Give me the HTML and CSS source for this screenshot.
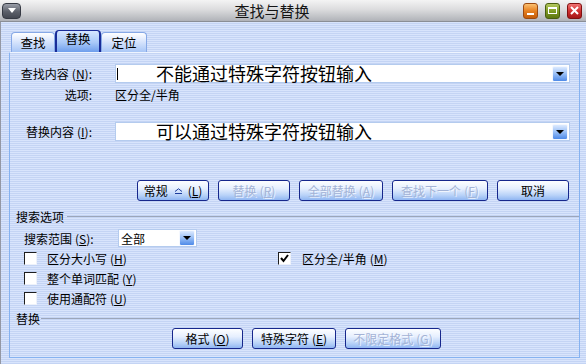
FILE: index.html
```html
<!DOCTYPE html>
<html>
<head>
<meta charset="utf-8">
<link rel="stylesheet" href="styles.css">
</head>
<body>
<div class="window">
  <div class="titlebar">
    <div class="menu-btn"><span class="tri"></span></div>
    <div class="title">查找与替换</div>
    <div class="wbtns">
      <div class="wbtn min"><span></span></div>
      <div class="wbtn max"><span></span></div>
      <div class="wbtn close"><svg width="9" height="9" viewBox="0 0 9 9"><path d="M1 1 L8 8 M8 1 L1 8" stroke="#fff" stroke-width="2" fill="none"/></svg></div>
    </div>
  </div>
  <div class="client">
    <div class="tabs">
      <div class="tab t1">查找</div>
      <div class="tab t2 active">替换</div>
      <div class="tab t3">定位</div>
    </div>
    <div class="panel">
      <div class="row r-find">
        <span class="lbl">查找内容<span class="k">(<u>N</u>)</span>:</span>
        <div class="combo"><span class="caret"></span><span class="ctext">不能通过特殊字符按钮输入</span><span class="drop"></span></div>
      </div>
      <div class="row r-opt">
        <span class="lbl">选项:</span>
        <span>区分全/半角</span>
      </div>
      <div class="row r-rep">
        <span class="lbl">替换内容<span class="k">(<u>I</u>)</span>:</span>
        <div class="combo"><span class="ctext nocaret">可以通过特殊字符按钮输入</span><span class="drop"></span></div>
      </div>
      <div class="btnrow r-btns">
        <div class="btn w72">常规<svg class="chev" width="9" height="6" viewBox="0 0 9 6"><path d="M1 3.5 L4.5 0.8 L8 3.5" stroke="#1c3c9c" fill="none"/><path d="M1 5.5 H8" stroke="#1c3c9c"/></svg>(<u>L</u>)</div>
        <div class="btn w72 dis">替换<span class="k">(<u>R</u>)</span></div>
        <div class="btn w84 dis">全部替换<span class="k">(<u>A</u>)</span></div>
        <div class="btn w96 dis">查找下一个<span class="k">(<u>F</u>)</span></div>
        <div class="btn w72">取消</div>
      </div>
      <div class="sec s1"><span>搜索选项</span><span class="line"></span></div>
      <div class="r-range">
        <span class="lbl2">搜索范围<span class="k">(<u>S</u>)</span>:</span>
        <div class="select"><span class="stext">全部</span><span class="drop"></span></div>
      </div>
      <div class="chk-row first">
        <div class="left-group"><span class="cb"></span><span>区分大小写<span class="k">(<u>H</u>)</span></span></div>
        <span class="cb checked"><svg width="11" height="11" viewBox="0 0 11 11"><path d="M2 5 L4.5 8 L9 2" stroke="#000" stroke-width="2" fill="none"/></svg></span><span>区分全/半角<span class="k">(<u>M</u>)</span></span>
      </div>
      <div class="chk-row">
        <span class="cb"></span><span>整个单词匹配<span class="k">(<u>Y</u>)</span></span>
      </div>
      <div class="chk-row">
        <span class="cb"></span><span>使用通配符<span class="k">(<u>U</u>)</span></span>
      </div>
      <div class="sec s2"><span>替换</span><span class="line"></span></div>
      <div class="btnrow r-btns2">
        <div class="btn w71">格式<span class="k">(<u>O</u>)</span></div>
        <div class="btn w84">特殊字符<span class="k">(<u>E</u>)</span></div>
        <div class="btn w96 dis">不限定格式<span class="k">(<u>G</u>)</span></div>
      </div>
    </div>
  </div>
</div>
</body>
</html>
```
FILE: styles.css
```css
* { box-sizing: border-box; }
body {
  margin: 0;
  width: 586px;
  height: 364px;
  overflow: hidden;
  font-family: "Noto Sans CJK SC", "Noto Sans", sans-serif;
  font-size: 12px;
  color: #000;
}
.window {
  width: 586px;
  height: 364px;
  display: flex;
  flex-direction: column;
  background: repeating-linear-gradient(to bottom, #d8e4fc 0px, #d8e4fc 1px, #c4d4f4 1px, #c4d4f4 2px);
}
.titlebar {
  height: 22px;
  flex: none;
  display: flex;
  align-items: center;
  padding: 0 4px 0 2px;
  background: linear-gradient(#f4f4f4, #dcdcde 45%, #c0c2c6 80%, #b0b2b8);
  border-bottom: 1px solid #8a8e96;
}
.menu-btn {
  width: 19px;
  height: 16px;
  border-radius: 4px;
  background: linear-gradient(#9a9ea8, #5c606a 55%, #444852);
  border: 1px solid #363a44;
  display: flex;
  align-items: center;
  justify-content: center;
}
.menu-btn .tri {
  width: 0;
  height: 0;
  border-left: 4px solid transparent;
  border-right: 4px solid transparent;
  border-top: 5px solid #fff;
}
.title {
  flex: 1;
  text-align: center;
  font-size: 15px;
  line-height: 21px;
  color: #141414;
}
.wbtns { display: flex; gap: 7px; }
.wbtn {
  width: 15px;
  height: 16px;
  border-radius: 3px;
  display: flex;
  align-items: center;
  justify-content: center;
}
.min { background: linear-gradient(#fbc070, #e68020 50%, #c45c08); border: 1px solid #9c4a10; }
.min span { width: 7px; height: 2px; background: #fff; margin-top: 7px; }
.max { background: linear-gradient(#b4c860, #809c24 50%, #5e7612); border: 1px solid #4a5e10; }
.max span { width: 9px; height: 7px; border: 1px solid #fff; border-top-width: 2px; }
.close { background: linear-gradient(#f07474, #d03030 50%, #a41616); border: 1px solid #801010; }

.client {
  flex: 1;
  border-left: 1px solid #9498a4;
  display: flex;
  flex-direction: column;
}
.tabs {
  height: 30px;
  flex: none;
  display: flex;
  align-items: flex-end;
  padding: 8px 0 0 10px;
}
.tab {
  height: 20px;
  border: 1px solid #86a8e6;
  border-bottom: none;
  border-radius: 4px 4px 0 0;
  background: linear-gradient(#ffffff, #dde8fd 40%, #a8c6f6);
  text-align: center;
  line-height: 19px;
  font-size: 12.5px;
}
.t1 { width: 44px; }
.t2 { width: 46px; }
.t3 { width: 46px; }
.tab.active {
  height: 22px;
  border: 1px solid #1a2c98;
  border-width: 1px 2px 0 2px;
  background: linear-gradient(#d6e6ff, #a8c8f8 55%, #6e9eec);
  line-height: 15px;
}
.panel {
  margin-left: 8px;
  width: 571px;
  height: 306px;
  border: 1px solid #86b2f0;
  border-top-color: #eef4ff;
  display: flex;
  flex-direction: column;
}
.k { margin-left: 3px; }
.row { display: flex; align-items: center; flex: none; }
.lbl {
  width: 82px;
  margin-right: 23px;
  text-align: right;
  flex: none;
  white-space: nowrap;
}
.r-find { margin-top: 11px; height: 19px; }
.r-opt { margin-top: 4px; height: 15px; }
.r-rep { margin-top: 20px; height: 19px; }
.combo {
  width: 455px;
  height: 19px;
  background: #fff;
  border: 1px solid #b4cbee;
  display: flex;
  align-items: center;
}
.caret { width: 1px; height: 12px; background: #000; margin-left: 1px; flex: none; }
.ctext {
  flex: 1;
  font-size: 18px;
  line-height: 19px;
  margin-left: 38px;
  white-space: nowrap;
}
.ctext.nocaret { margin-left: 40px; }
.drop {
  width: 16px;
  height: 16px;
  flex: none;
  margin-right: 1px;
  border: 1px solid #f4f8ff;
  border-radius: 2px;
  background: linear-gradient(#dceaff, #98bef6 50%, #4e8ae8);
  display: flex;
  align-items: center;
  justify-content: center;
}
.drop::after {
  content: "";
  width: 0;
  height: 0;
  border-left: 4px solid transparent;
  border-right: 4px solid transparent;
  border-top: 4px solid #000;
}
.btnrow { display: flex; gap: 9px; flex: none; }
.r-btns { margin-top: 39px; padding-left: 127px; }
.r-btns2 { margin-top: 2px; padding-left: 162px; }
.btn {
  height: 21px;
  border: 1px solid #17278c;
  border-radius: 3px;
  background: linear-gradient(#fdfeff 0%, #e6effe 40%, #b8d2f8 75%, #90b6f2 100%);
  display: flex;
  align-items: center;
  justify-content: center;
  white-space: nowrap;
  font-size: 12px;
}
.btn.dis { color: #a4b3d6; text-shadow: 1px 1px 0 rgba(255,255,255,0.7); }
.w71 { width: 71px; }
.w72 { width: 72px; }
.w84 { width: 84px; }
.w96 { width: 96px; }
.chev { margin: 0 5px 0 6px; }
.sec {
  display: flex;
  align-items: center;
  height: 15px;
  padding-left: 6px;
  flex: none;
}
.sec .line { flex: 1; height: 1px; background: #9ca6ba; margin-left: 3px; }
.s1 { margin-top: 8px; }
.s2 { margin-top: 3px; }
.s2 .line { margin-left: 1px; }
.r-range {
  margin-top: 5px;
  height: 18px;
  display: flex;
  align-items: center;
  padding-left: 14px;
  flex: none;
}
.lbl2 { width: 94px; white-space: nowrap; }
.select {
  width: 79px;
  height: 18px;
  background: #fff;
  border: 1px solid #b4cbee;
  display: flex;
  align-items: center;
}
.stext { flex: 1; padding-left: 2px; }
.chk-row {
  height: 20px;
  display: flex;
  align-items: center;
  padding-left: 14px;
  flex: none;
}
.chk-row.first { margin-top: 1px; }
.left-group { width: 254px; display: flex; align-items: center; }
.cb {
  width: 13px;
  height: 13px;
  flex: none;
  background: #fff;
  border: 1px solid;
  border-color: #1e1e1e #eef2fa #eef2fa #1e1e1e;
  margin-right: 10px;
  display: flex;
  align-items: center;
  justify-content: center;
}
.cb.checked { margin-right: 11px; }
```
